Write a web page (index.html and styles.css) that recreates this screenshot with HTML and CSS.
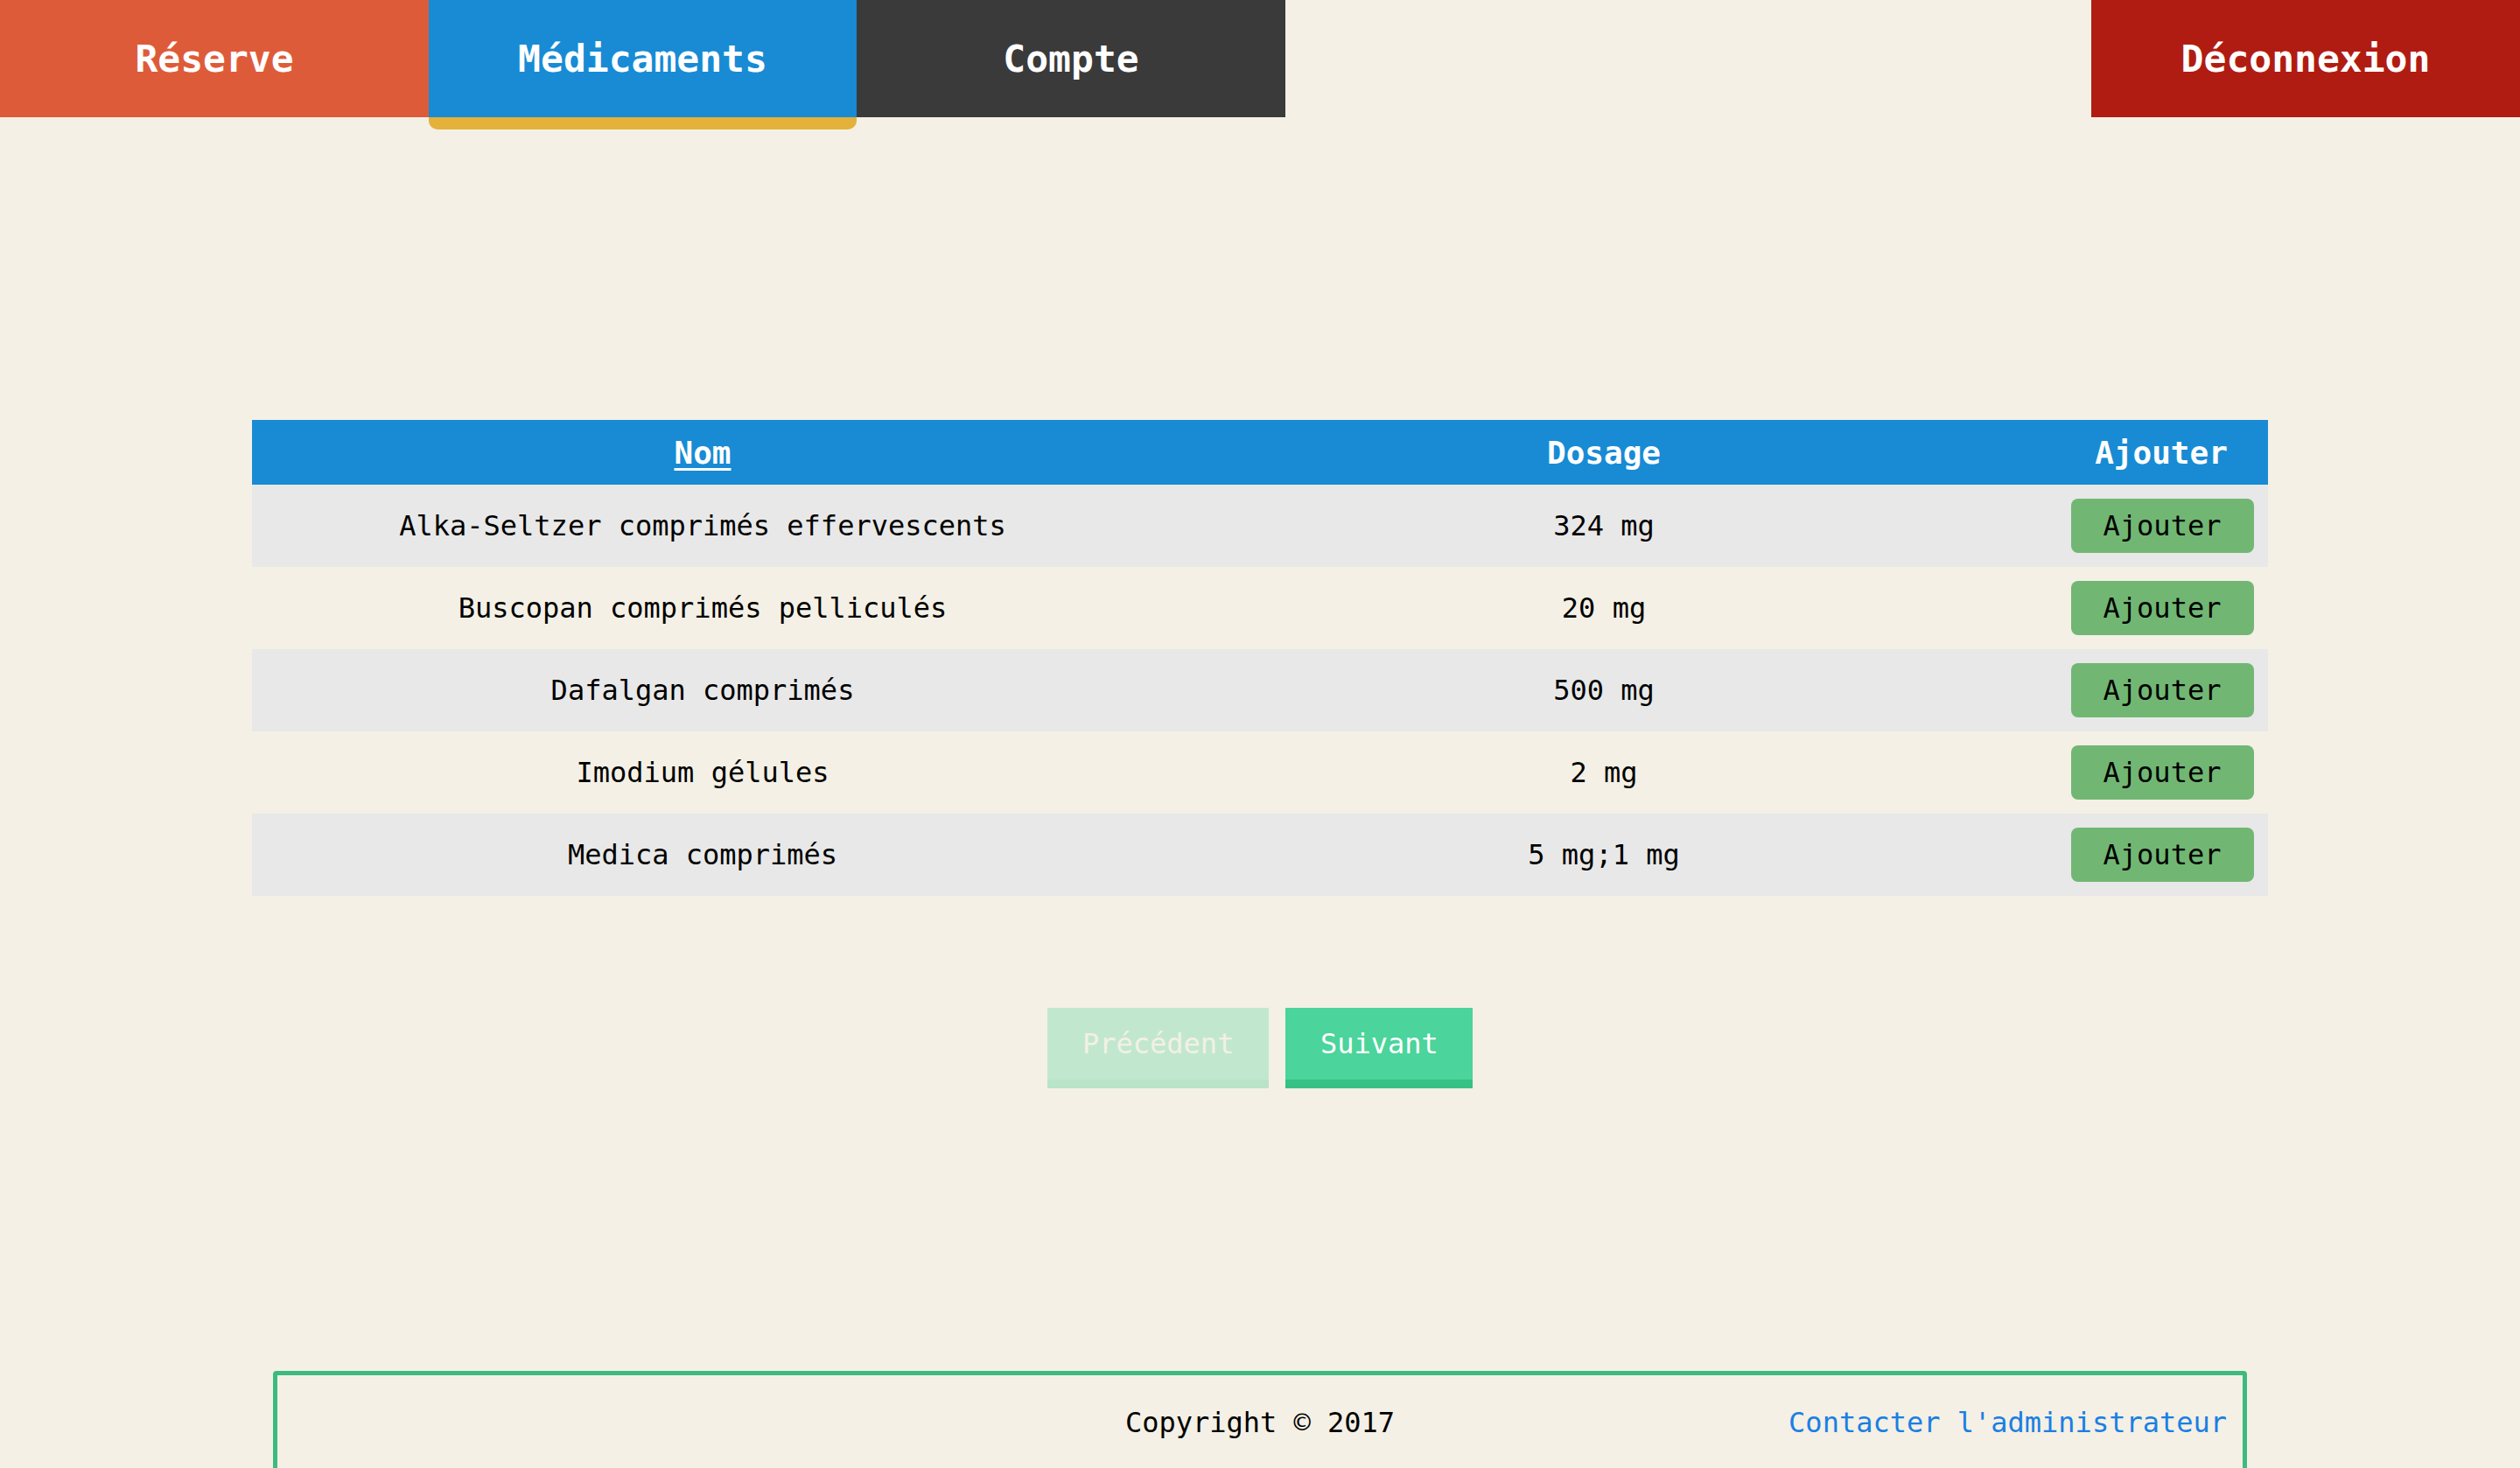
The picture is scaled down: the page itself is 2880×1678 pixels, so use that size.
FILE: index.html
```html
<!DOCTYPE html>
<html lang="fr">
<head>
<meta charset="utf-8">
<title>Médicaments</title>
<link rel="stylesheet" href="styles.css">
</head>
<body>
<nav class="nav">
  <a class="tab tab-reserve" href="#">Réserve</a>
  <a class="tab tab-medic active" href="#">Médicaments</a>
  <a class="tab tab-compte" href="#">Compte</a>
  <span class="nav-spacer"></span>
  <a class="tab tab-logout" href="#">Déconnexion</a>
</nav>
<main class="main">
  <table class="meds">
    <colgroup>
      <col class="col-nom">
      <col class="col-dos">
      <col class="col-add">
    </colgroup>
    <thead>
      <tr>
        <th><a class="sort" href="#">Nom</a></th>
        <th>Dosage</th>
        <th>Ajouter</th>
      </tr>
    </thead>
    <tbody>
      <tr><td>Alka-Seltzer comprimés effervescents</td><td>324 mg</td><td><button class="add">Ajouter</button></td></tr>
      <tr><td>Buscopan comprimés pelliculés</td><td>20 mg</td><td><button class="add">Ajouter</button></td></tr>
      <tr><td>Dafalgan comprimés</td><td>500 mg</td><td><button class="add">Ajouter</button></td></tr>
      <tr><td>Imodium gélules</td><td>2 mg</td><td><button class="add">Ajouter</button></td></tr>
      <tr><td>Medica comprimés</td><td>5 mg;1 mg</td><td><button class="add">Ajouter</button></td></tr>
    </tbody>
  </table>
  <div class="pager">
    <button class="page-btn prev" disabled>Précédent</button>
    <button class="page-btn next">Suivant</button>
  </div>
</main>
<footer class="footer">
  <span></span>
  <span class="copy">Copyright © 2017</span>
  <a class="contact" href="#">Contacter l'administrateur</a>
</footer>
</body>
</html>
```

FILE: styles.css
```css
html, body {
  margin: 0;
  padding: 0;
}
body {
  background: #f4f0e5;
  font-family: "DejaVu Sans Mono", "Liberation Mono", monospace;
  font-size: 32px;
  color: #000;
}
.nav {
  display: flex;
  align-items: flex-start;
  height: 134px;
}
.tab {
  display: block;
  width: 490px;
  height: 134px;
  line-height: 134px;
  text-align: center;
  color: #fff;
  font-weight: bold;
  font-size: 43px;
  text-decoration: none;
}
.tab-reserve { background: #de5b3a; }
.tab-medic { background: #188bd4; width: 489px; }
.tab-compte { background: #3a3a3a; }
.tab-logout { background: #b11c12; }
.active {
  border-bottom: 14px solid #e4b13b;
  border-radius: 0 0 10px 10px;
}
.nav-spacer { flex: 1; }

.main {
  padding-top: 346px;
}
.meds {
  width: 2304px;
  margin: 0 auto;
  border-collapse: collapse;
  table-layout: fixed;
}
.col-nom { width: 1030px; }
.col-dos { width: 1030px; }
.col-add { width: 244px; }
.meds th {
  background: #188bd4;
  color: #fff;
  font-size: 36px;
  font-weight: bold;
  height: 74px;
  padding: 0;
  text-align: center;
}
.sort {
  color: #fff;
  text-decoration: underline;
  text-decoration-thickness: 3px;
  text-underline-offset: 5px;
}
.meds td {
  height: 94px;
  padding: 0;
  text-align: center;
  vertical-align: middle;
}
.meds tbody tr:nth-child(odd) { background: #e8e8e8; }
.add {
  display: inline-block;
  width: 209px;
  height: 62px;
  border: none;
  border-radius: 8px;
  background: #71b773;
  color: #000;
  font-family: inherit;
  font-size: 32px;
  padding: 0;
  margin-left: 2px;
}

.pager {
  display: flex;
  justify-content: center;
  gap: 19px;
  margin-top: 128px;
}
.page-btn {
  font-family: inherit;
  font-size: 32px;
  height: 92px;
  padding: 0 40px;
  border: none;
  border-bottom: 10px solid;
  border-radius: 0;
}
.prev {
  background: #c1e8cf;
  border-bottom-color: #b9e4c8;
  color: #f4f0e5;
  width: 253px;
}
.next {
  background: #4bd49b;
  border-bottom-color: #37c185;
  color: #fff;
  width: 214px;
}

.footer {
  box-sizing: border-box;
  width: 2256px;
  margin: 323px auto 0;
  border: 5px solid #3dba7e;
  border-radius: 4px;
  display: grid;
  grid-template-columns: 1fr auto 1fr;
  align-items: center;
  padding: 35px 18px 60px;
  line-height: 38px;
}
.copy { text-align: center; }
.contact {
  justify-self: end;
  color: #1a7fe3;
  text-decoration: none;
}
```
